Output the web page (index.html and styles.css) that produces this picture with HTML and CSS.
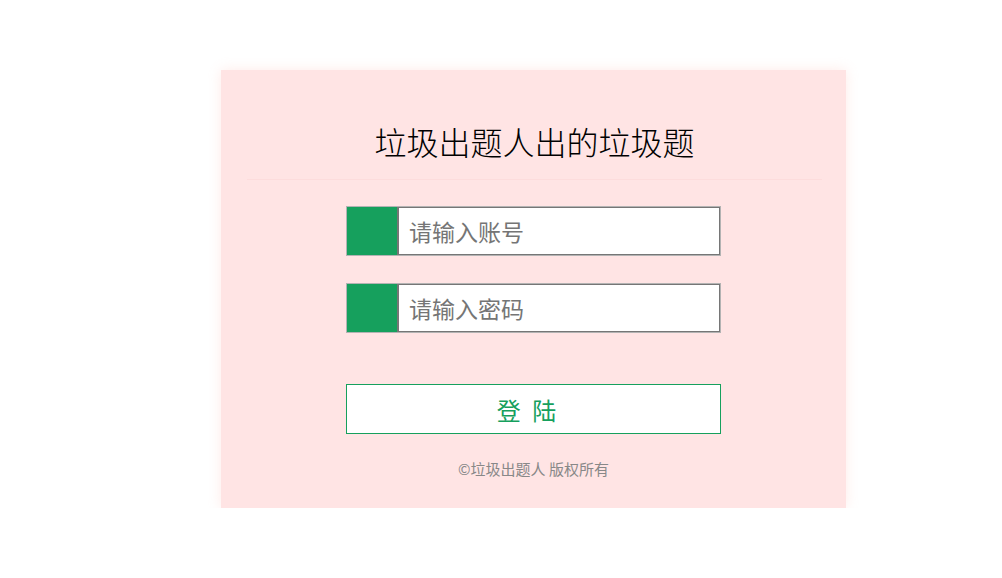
FILE: index.html
```html
<!DOCTYPE html>
<html lang="zh-CN">
<head>
<meta charset="utf-8">
<title>登陆</title>
<link rel="stylesheet" href="styles.css">
</head>
<body>
<div class="card">
  <div class="header">
    <h1 class="title">垃圾出题人出的垃圾题</h1>
  </div>
  <form class="form">
    <div class="field">
      <span class="field-icon"></span>
      <input class="field-input" type="text" placeholder="请输入账号">
    </div>
    <div class="field">
      <span class="field-icon"></span>
      <input class="field-input" type="password" placeholder="请输入密码">
    </div>
    <button class="login-btn" type="button">登 陆</button>
  </form>
  <p class="footer">©垃圾出题人 版权所有</p>
</div>
</body>
</html>
```
FILE: styles.css
```css
* { box-sizing: border-box; }
html, body {
  margin: 0;
  padding: 0;
  background: #ffffff;
  font-family: "Noto Sans CJK SC", "Noto Sans", sans-serif;
}
.card {
  width: 625px;
  height: 438px;
  margin: 70px 0 0 221px;
  background: #ffe4e4;
  box-shadow: 0 0 12px rgba(255, 210, 205, 0.45);
  padding-top: 51px;
  display: flex;
  flex-direction: column;
  align-items: center;
}
.header {
  align-self: stretch;
  margin: 0 24px 0 26px;
  padding-bottom: 18px;
  border-bottom: 1px solid #fddcdc;
  display: flex;
  justify-content: center;
}
.title {
  margin: 0;
  font-size: 32px;
  line-height: 40px;
  font-weight: 300;
  color: #000;
  letter-spacing: 0;
}
.form {
  width: 375px;
  margin-top: 26px;
  display: flex;
  flex-direction: column;
  gap: 27px;
}
.field {
  display: flex;
  height: 50px;
  border: 1px solid #b3b3b3;
}
.field-icon {
  width: 50px;
  flex: none;
  background: #16a05d;
}
.field-input {
  flex: 1;
  min-width: 0;
  border: 1px solid #767676;
  border-left-width: 2px;
  background: #fff;
  padding: 0 10px;
  font-family: inherit;
  font-size: 23px;
  color: #333;
  outline: none;
}
.field-input::placeholder {
  color: #757575;
}
.login-btn {
  margin-top: 24px;
  height: 50px;
  border: 1px solid #16a05d;
  background: #fff;
  color: #16a05d;
  font-family: inherit;
  font-size: 24px;
  letter-spacing: 3px;
  padding: 0 11px 0 0;
  cursor: pointer;
}
.footer {
  margin: 25px 0 0;
  font-size: 15px;
  line-height: 20px;
  color: #888;
}
```
